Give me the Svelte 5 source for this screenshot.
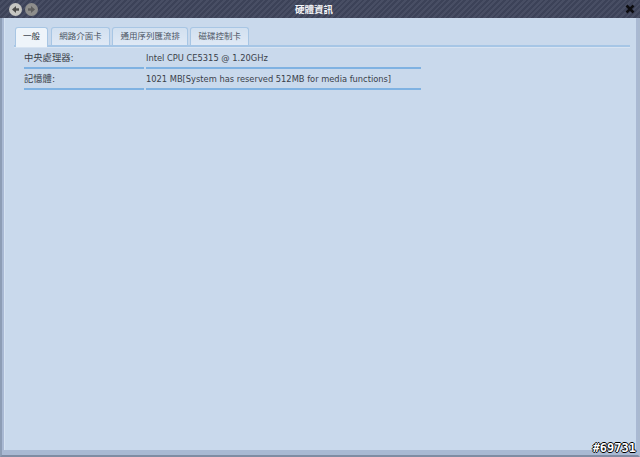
<script>
  const tabs = ['一般', '網路介面卡', '通用序列匯流排', '磁碟控制卡'];
  const rows = [
    ['中央處理器:', 'Intel CPU CE5315 @ 1.20GHz'],
    ['記憶體:', '1021 MB[System has reserved 512MB for media functions]']
  ];
</script>

<div class="win">
  <header class="title">
    <div class="navs">
      <span class="nav">
        <svg width="13" height="13" viewBox="0 0 13 13"><path d="M10 6.500H6" stroke="#4a4a48" stroke-width="2.400"/><path d="M7 3 3 6.500 7 10z" fill="#4a4a48"/></svg>
      </span>
      <span class="nav dim">
        <svg width="13" height="13" viewBox="0 0 13 13"><path d="M3 6.500h4" stroke="#5e5e5e" stroke-width="2.400"/><path d="M6 3l4 3.500L6 10z" fill="#5e5e5e"/></svg>
      </span>
    </div>
    <div class="heading">硬體資訊</div>
    <svg class="close" width="10" height="10" viewBox="0 0 10 10"><path d="M1.500 1.500l7 7M8.500 1.500l-7 7" stroke="#0c0c10" stroke-width="2.600"/></svg>
  </header>
  <div class="frame">
    <div class="panel">
      <div class="tabs">
        {#each tabs as t, i}
          <div class="tab" class:active={i === 0}>{t}</div>
        {/each}
      </div>
      <div class="rows">
        {#each rows as r}
          <div class="row">
            <div class="cell label">{r[0]}</div>
            <div class="cell value">{r[1]}</div>
          </div>
        {/each}
      </div>
    </div>
  </div>
  <div class="mark">#69731</div>
</div>

<style>
  :global(body) { margin: 0; background: #c9d9ec; }
  .win {
    position: relative;
    width: 640px;
    height: 457px;
    overflow: hidden;
    display: flex;
    flex-direction: column;
    font-family: "DejaVu Sans", "Noto Sans CJK TC", sans-serif;
    font-size: 8.500px;
    color: #3a3f4a;
  }
  .title {
    flex: none;
    height: 18px;
    display: flex;
    align-items: center;
    justify-content: space-between;
    padding: 0 5px 0 9px;
    background: repeating-linear-gradient(135deg, #3c4258 0 2px, #484e64 2px 4px);
    position: relative;
  }
  .navs { display: flex; gap: 3px; }
  .nav {
    width: 13px;
    height: 13px;
    border-radius: 50%;
    background: #c6c6c2;
    display: flex;
  }
  .nav.dim { background: #8e8e8c; }
  .heading {
    position: absolute;
    left: 0;
    right: 12px;
    text-align: center;
    color: #f2f3f6;
    font-size: 9.500px;
    font-weight: 700;
  }
  .close { position: relative; }
  .frame {
    flex: 1;
    display: flex;
    border-left: 2px solid #8d9db5;
    border-right: 2px solid #a9b9d0;
    border-bottom: 2px solid #7f8ca3;
    background: #a9b9d3;
    padding: 0 2px 5px 2px;
  }
  .panel {
    flex: 1;
    background: #c9d9ec;
    padding: 9px 6px 0 9px;
    border-left: 1px solid #d5e2f1;
  }
  .tabs {
    display: flex;
    gap: 2px;
    height: 18px;
    padding-left: 1px;
    border-bottom: 2px solid #a6c6e6;
    box-shadow: 0 1px 0 #d8e4f2;
  }
  .tab {
    height: 18px;
    padding: 0 7.300px;
    line-height: 17px;
    box-sizing: border-box;
    border: 1px solid #a8c6e4;
    border-bottom: 0;
    border-radius: 3px 3px 0 0;
    background: linear-gradient(#d2e0f0, #dfe9f5);
    color: #4c5564;
    white-space: nowrap;
  }
  .tab.active {
    height: 20px;
    padding: 0 7px;
    margin-right: 1px;
    background: #eef4fa;
    color: #333a46;
    position: relative;
  }
  .rows { padding: 1px 0 0 10px; }
  .row { display: flex; gap: 2px; height: 21px; }
  .cell {
    box-sizing: border-box;
    height: 21px;
    line-height: 16px;
    padding: 2px 0 0;
    border-bottom: 2px solid #7fb2e2;
    white-space: nowrap;
  }
  .label { width: 120px; font-size: 9.300px; }
  .value { width: 275px; font-size: 8.300px; }
  .mark {
    position: absolute;
    right: 4px;
    bottom: 3px;
    color: #fff;
    font: 700 12px "DejaVu Sans Mono", monospace;
    line-height: 12px;
    text-shadow: 1px 0 0 #000, -1px 0 0 #000, 0 1px 0 #000, 0 -1px 0 #000;
  }
</style>
